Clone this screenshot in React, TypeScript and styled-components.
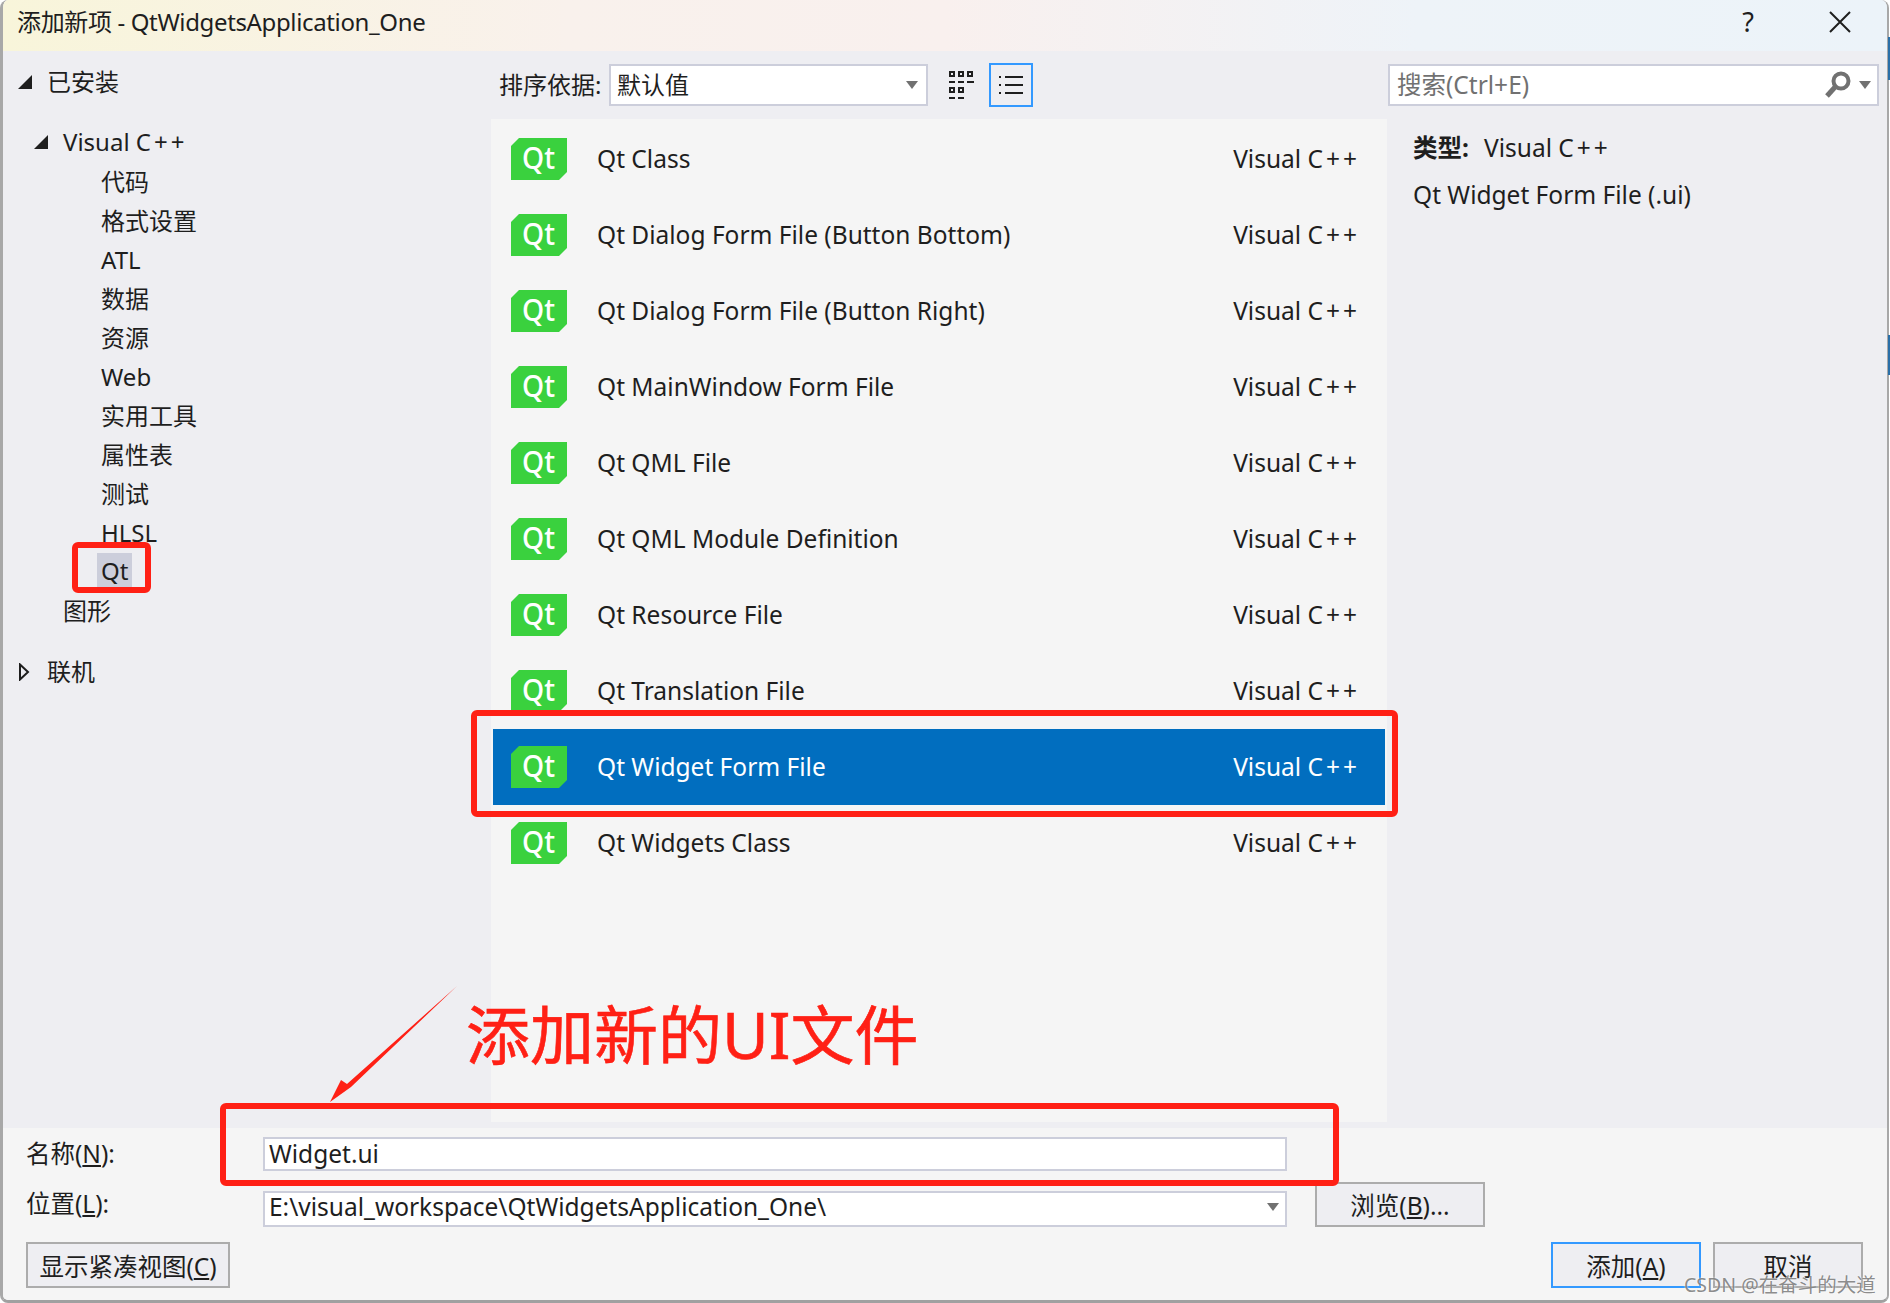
import React from 'react';
import styled, { createGlobalStyle } from 'styled-components';

const GlobalStyle = createGlobalStyle`
  html, body {
    margin: 0;
    padding: 0;
    background: #fff;
  }
  * {
    box-sizing: border-box;
  }
`;

const Page = styled.div`
  position: relative;
  width: 1890px;
  height: 1303px;
  overflow: hidden;
  font-family: "Noto Sans", "Noto Sans CJK SC", sans-serif;
  font-size: 24.5px;
  line-height: 34px;
  color: #1e1e1e;
`;

const Window = styled.div`
  width: 1889px;
  height: 1303px;
  display: flex;
  flex-direction: column;
  background: #eeeef2;
  border-left: 3px solid #a8a8a8;
  border-right: 2px solid #a8a8a8;
  border-bottom: 3px solid #a0a0a0;
  border-radius: 8px;
  overflow: hidden;
`;

const TitleBar = styled.div`
  height: 51px;
  flex: none;
  display: flex;
  align-items: center;
  padding: 0 36px 8px 14px;
  background: linear-gradient(90deg, #f8f5da 0%, #f9f1ec 30%, #f9f0ee 50%, #eef3f8 75%, #ecf3f9 100%);
`;

const TitleText = styled.div`
  flex: 1;
  font-size: 24px;
  letter-spacing: -0.36px;
`;

const HelpMark = styled.div`
  width: 20px;
  margin-right: 71px;
  font-size: 27px;
  text-align: center;
`;

const Body = styled.div`
  flex: 1;
  min-height: 0;
  display: flex;
`;

const Tree = styled.div`
  width: 488px;
  flex: none;
  padding-top: 11px;
  font-size: 24px;
`;

const TreeRow = styled.div<{ $indent: number; $gap?: number; $after?: number }>`
  height: 39px;
  display: flex;
  align-items: center;
  padding-left: ${p => p.$indent}px;
  margin-top: ${p => p.$gap ?? 0}px;
  margin-bottom: ${p => p.$after ?? 0}px;
`;

const Caret = styled.svg`
  width: 14px;
  height: 18px;
  flex: none;
  margin-right: 15px;
`;

const SelectedLabel = styled.span`
  height: 36px;
  line-height: 36px;
  margin: -2px 0 0 -4px;
  padding: 0 4px;
  background: #cccedb;
`;

const Center = styled.div`
  width: 896px;
  flex: none;
  display: flex;
  flex-direction: column;
`;

const Toolbar = styled.div`
  height: 68px;
  flex: none;
  display: flex;
  align-items: center;
  padding-left: 8px;
`;

const SortLabel = styled.span`
  width: 110px;
  flex: none;
  font-size: 24px;
`;

const Select = styled.div`
  width: 319px;
  height: 42px;
  flex: none;
  display: flex;
  align-items: center;
  justify-content: space-between;
  padding: 0 8px 0 6px;
  background: #fff;
  border: 2px solid #cccedb;
  font-size: 24px;
`;

const ViewButton = styled.div<{ $active?: boolean }>`
  width: ${p => (p.$active ? 44 : 43)}px;
  height: 44px;
  flex: none;
  display: flex;
  align-items: center;
  justify-content: center;
  margin-left: ${p => (p.$active ? 6 : 12)}px;
  border: 2px solid ${p => (p.$active ? '#3399ff' : 'transparent')};
`;

const List = styled.div`
  flex: 1;
  margin-bottom: 6px;
  padding: 2px 2px 0;
  background: #f5f5f5;
`;

const Row = styled.div<{ $selected?: boolean }>`
  height: 76px;
  display: flex;
  align-items: center;
  padding: 0 28px 0 18px;
  background: ${p => (p.$selected ? '#016ebf' : 'transparent')};
  color: ${p => (p.$selected ? '#fff' : '#1e1e1e')};
`;

const QtLogo = styled.svg`
  width: 56px;
  height: 42px;
  flex: none;
  margin-right: 30px;
`;

const RowName = styled.span`
  flex: 1;
`;

const TypeName = styled.span`
  white-space: nowrap;
`;

const Plus = styled.span`
  margin-left: 3px;
  margin-right: -3px;
  letter-spacing: 3px;
`;

const Side = styled.div`
  flex: 1;
  min-width: 0;
  display: flex;
  flex-direction: column;
`;

const SearchBar = styled.div`
  width: 491px;
  height: 42px;
  margin: 13px 0 0 1px;
  flex: none;
  display: flex;
  align-items: center;
  padding: 0 6px 0 7px;
  background: #fff;
  border: 2px solid #cccedb;
  color: #717171;
`;

const SearchText = styled.span`
  flex: 1;
`;

const SearchArrow = styled.svg`
  margin-left: 8px;
`;

const Details = styled.div`
  padding: 18px 0 0 26px;
`;

const DetailLine = styled.div`
  height: 47px;
  display: flex;
  align-items: center;
`;

const DetailKey = styled.b`
  width: 71px;
  font-weight: 700;
`;

const Footer = styled.div`
  flex: none;
  height: 172px;
  padding: 9px 24px 0 23px;
  background: #f5f5f5;
`;

const FieldRow = styled.div<{ $height: number; $gap: number }>`
  height: ${p => p.$height}px;
  margin-bottom: ${p => p.$gap}px;
  display: flex;
  align-items: flex-end;
`;

const FieldLabel = styled.span`
  width: 237px;
  flex: none;
  align-self: center;
  margin-top: -1px;
`;

const Input = styled.div<{ $height: number; $lift?: number }>`
  width: 1024px;
  height: ${p => p.$height}px;
  flex: none;
  display: flex;
  align-items: center;
  justify-content: space-between;
  padding: 0 6px ${p => p.$lift ?? 0}px 4px;
  background: #fff;
  border: 2px solid #cccedb;
`;

const Button = styled.div<{ $width: number; $primary?: boolean }>`
  width: ${p => p.$width}px;
  height: 46px;
  flex: none;
  display: flex;
  align-items: center;
  justify-content: center;
  padding-top: 3px;
  background: #eeeef2;
  border: 2px solid ${p => (p.$primary ? '#3399ff' : '#acacac')};
`;

const BrowseButton = styled(Button)`
  height: 45px;
  margin-left: 28px;
`;

const ActionRow = styled.div`
  display: flex;
  gap: 12px;
`;

const Spacer = styled.div`
  flex: 1;
`;

const Key = styled.span`
  text-decoration: underline;
`;

// annotations drawn on top of the screenshot
const RedBox = styled.div<{ $x: number; $y: number; $w: number; $h: number }>`
  position: absolute;
  left: ${p => p.$x}px;
  top: ${p => p.$y}px;
  width: ${p => p.$w}px;
  height: ${p => p.$h}px;
  border: 6px solid #ff2015;
  border-radius: 6px;
  pointer-events: none;
`;

const Annotation = styled.div`
  position: absolute;
  left: 466px;
  top: 990px;
  font-size: 64px;
  line-height: 90px;
  color: #ff2015;
  -webkit-text-stroke: 0.6px #ff2015;
  white-space: nowrap;
`;

const ArrowSvg = styled.svg`
  position: absolute;
  left: 320px;
  top: 980px;
`;

const Watermark = styled.div`
  position: absolute;
  left: 1684px;
  top: 1268px;
  font-size: 19.5px;
  color: rgba(110, 110, 110, 0.8);
  text-shadow: 0 0 2px #fff;
  white-space: nowrap;
`;

// bits of the desktop that show past the window's right edge
const BehindSliver = styled.div<{ $y: number; $h: number }>`
  position: absolute;
  left: 1888px;
  top: ${p => p.$y}px;
  width: 2px;
  height: ${p => p.$h}px;
  background: #2a6fa8;
`;

const items = [
  'Qt Class',
  'Qt Dialog Form File (Button Bottom)',
  'Qt Dialog Form File (Button Right)',
  'Qt MainWindow Form File',
  'Qt QML File',
  'Qt QML Module Definition',
  'Qt Resource File',
  'Qt Translation File',
  'Qt Widget Form File',
  'Qt Widgets Class',
];

const children = ['代码', '格式设置', 'ATL', '数据', '资源', 'Web', '实用工具', '属性表', '测试', 'HLSL'];

const Expanded = () => (
  <Caret viewBox="0 0 14 18">
    <polygon points="0,16 14,2 14,16" fill="#1e1e1e" />
  </Caret>
);

const Collapsed = () => (
  <Caret viewBox="0 0 14 18">
    <polygon points="2,1.5 10,9 2,16.5" fill="none" stroke="#1e1e1e" strokeWidth="2" />
  </Caret>
);

const QtIcon = () => (
  <QtLogo viewBox="0 0 56 42">
    <polygon points="8,0 56,0 56,34 48,42 0,42 0,8" fill="#3ad13e" />
    <text x="11" y="31" fontSize="31" fontWeight="500" fill="#fff" textLength="33" lengthAdjust="spacingAndGlyphs">
      Qt
    </text>
  </QtLogo>
);

const DownArrow = () => (
  <svg width="12" height="8" viewBox="0 0 12 8">
    <polygon points="0,0 12,0 6,8" fill="#717171" />
  </svg>
);

const VisualCpp = () => (
  <TypeName>
    Visual C<Plus>++</Plus>
  </TypeName>
);

const App: React.FC = () => {
  return (
    <Page>
      <GlobalStyle />
      <Window>
        <TitleBar>
          <TitleText>添加新项 - QtWidgetsApplication_One</TitleText>
          <HelpMark>?</HelpMark>
          <svg width="22" height="22" viewBox="0 0 22 22">
            <path d="M1 1 L21 21 M21 1 L1 21" stroke="#1e1e1e" strokeWidth="2" fill="none" />
          </svg>
        </TitleBar>
        <Body>
          <Tree>
            <TreeRow $indent={15}>
              <Expanded />
              已安装
            </TreeRow>
            <TreeRow $indent={31} $gap={21} $after={1}>
              <Expanded />
              <VisualCpp />
            </TreeRow>
            {children.map(c => (
              <TreeRow key={c} $indent={98}>
                {c}
              </TreeRow>
            ))}
            <TreeRow $indent={98}>
              <SelectedLabel>Qt</SelectedLabel>
            </TreeRow>
            <TreeRow $indent={60}>图形</TreeRow>
            <TreeRow $indent={15} $gap={22}>
              <Collapsed />
              联机
            </TreeRow>
          </Tree>
          <Center>
            <Toolbar>
              <SortLabel>排序依据:</SortLabel>
              <Select>
                默认值
                <DownArrow />
              </Select>
              <ViewButton>
                <svg width="26" height="30" viewBox="0 0 26 30" fill="none" stroke="#1e1e1e" strokeWidth="2">
                  <rect x="1" y="2" width="4" height="4" />
                  <rect x="10" y="2" width="4" height="4" />
                  <rect x="19" y="2" width="4" height="4" />
                  <path d="M0 12h6M9 12h6M18 12h7" />
                  <rect x="1" y="18" width="4" height="4" />
                  <rect x="10" y="18" width="4" height="4" />
                  <path d="M0 28h6M9 28h6" />
                </svg>
              </ViewButton>
              <ViewButton $active>
                <svg width="26" height="24" viewBox="0 0 26 24" fill="none" stroke="#1e1e1e" strokeWidth="2">
                  <path d="M1 4h2M7 4h18M1 12h2M7 12h18M1 20h2M7 20h18" />
                </svg>
              </ViewButton>
            </Toolbar>
            <List>
              {items.map(name => (
                <Row key={name} $selected={name === 'Qt Widget Form File'}>
                  <QtIcon />
                  <RowName>{name}</RowName>
                  <VisualCpp />
                </Row>
              ))}
            </List>
          </Center>
          <Side>
            <SearchBar>
              <SearchText>搜索(Ctrl+E)</SearchText>
              <svg width="28" height="30" viewBox="0 0 28 30" fill="none">
                <circle cx="18" cy="11" r="7.5" stroke="#717171" strokeWidth="4" />
                <path d="M13 16 L4 26" stroke="#717171" strokeWidth="5" />
              </svg>
              <SearchArrow width="12" height="8" viewBox="0 0 12 8">
                <polygon points="0,0 12,0 6,8" fill="#717171" />
              </SearchArrow>
            </SearchBar>
            <Details>
              <DetailLine>
                <DetailKey>类型:</DetailKey>
                <VisualCpp />
              </DetailLine>
              <DetailLine>Qt Widget Form File (.ui)</DetailLine>
            </Details>
          </Side>
        </Body>
        <Footer>
          <FieldRow $height={34} $gap={11}>
            <FieldLabel>
              名称(<Key>N</Key>):
            </FieldLabel>
            <Input $height={34}>Widget.ui</Input>
          </FieldRow>
          <FieldRow $height={45} $gap={15}>
            <FieldLabel>
              位置(<Key>L</Key>):
            </FieldLabel>
            <Input $height={36} $lift={5}>
              {'E:\\visual_workspace\\QtWidgetsApplication_One\\'}
              <DownArrow />
            </Input>
            <BrowseButton $width={170}>
              浏览(<Key>B</Key>)...
            </BrowseButton>
          </FieldRow>
          <ActionRow>
            <Button $width={204}>
              显示紧凑视图(<Key>C</Key>)
            </Button>
            <Spacer />
            <Button $width={150} $primary>
              添加(<Key>A</Key>)
            </Button>
            <Button $width={150}>取消</Button>
          </ActionRow>
        </Footer>
      </Window>

      <BehindSliver $y={37} $h={43} />
      <BehindSliver $y={335} $h={40} />
      <RedBox $x={72} $y={542} $w={79} $h={51} />
      <RedBox $x={471} $y={710} $w={927} $h={107} />
      <RedBox $x={220} $y={1103} $w={1119} $h={83} />
      <ArrowSvg width="150" height="130" viewBox="0 0 150 130">
        <polygon points="137,6 31,107 10,122 21,100 27,104" fill="#ff2015" />
      </ArrowSvg>
      <Annotation>添加新的UI文件</Annotation>
      <Watermark>CSDN @在奋斗的大道</Watermark>
    </Page>
  );
};

export default App;
